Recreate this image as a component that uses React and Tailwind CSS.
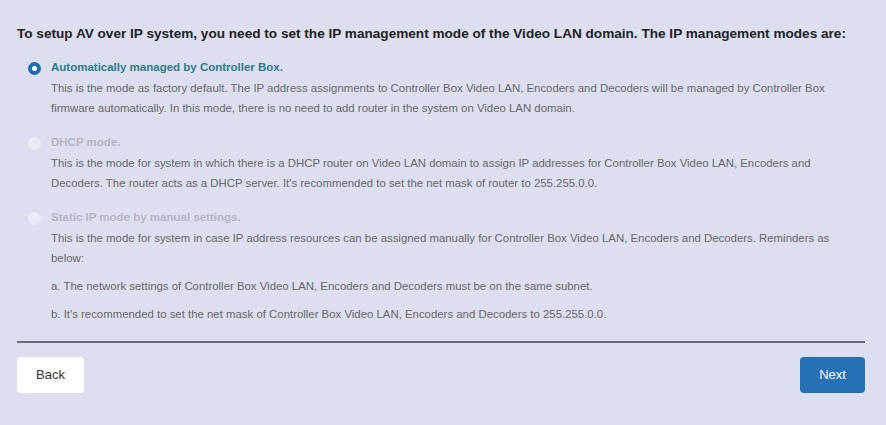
import { useState } from "react";

const modes = [
  {
    id: "auto",
    title: "Automatically managed by Controller Box.",
    body: [
      "This is the mode as factory default. The IP address assignments to Controller Box Video LAN, Encoders and Decoders will be managed by Controller Box firmware automatically. In this mode, there is no need to add router in the system on Video LAN domain.",
    ],
  },
  {
    id: "dhcp",
    title: "DHCP mode.",
    body: [
      "This is the mode for system in which there is a DHCP router on Video LAN domain to assign IP addresses for Controller Box Video LAN, Encoders and Decoders. The router acts as a DHCP server. It's recommended to set the net mask of router to 255.255.0.0.",
    ],
  },
  {
    id: "static",
    title: "Static IP mode by manual settings.",
    body: [
      "This is the mode for system in case IP address resources can be assigned manually for Controller Box Video LAN, Encoders and Decoders. Reminders as below:",
      "a. The network settings of Controller Box Video LAN, Encoders and Decoders must be on the same subnet.",
      "b. It's recommended to set the net mask of Controller Box Video LAN, Encoders and Decoders to 255.255.0.0.",
    ],
  },
];

const Radio = ({ checked }) =>
  checked ? (
    <span className="w-[13px] h-[13px] rounded-full bg-[#1f6db4] flex items-center justify-center shrink-0">
      <span className="w-[5px] h-[5px] rounded-full bg-white" />
    </span>
  ) : (
    <span className="w-[13px] h-[13px] rounded-full bg-[#ebebf5] shrink-0" />
  );

const App = () => {
  const [mode] = useState("auto");

  return (
    <div
      className="w-[886px] h-[425px] bg-[#dddeef] pl-[17px] pr-[21px] pt-[24px] text-[#686868]"
      style={{ fontFamily: '"Liberation Sans", Arial, sans-serif' }}
    >
      <h1 className="text-[13.6px] leading-[20px] font-bold text-[#222] whitespace-nowrap">
        To setup AV over IP system, you need to set the IP management mode of the Video LAN domain. The IP management modes are:
      </h1>

      <div className="mt-[14px] flex flex-col gap-[15px] pr-[19px]">
        {modes.map((m) => {
          const active = m.id === mode;
          return (
            <div key={m.id}>
              <div className="flex items-center gap-[10px] pl-[11px] h-[20px]">
                <Radio checked={active} />
                <span
                  className={
                    "text-[11.5px] font-bold " +
                    (active ? "text-[#2b7d8a]" : "text-[#b6b6c6]")
                  }
                >
                  {m.title}
                </span>
              </div>
              <div className="pl-[34px] flex flex-col gap-[8px]">
                {m.body.map((p, i) => (
                  <p key={i} className="text-[11.4px] leading-[20px]">
                    {p}
                  </p>
                ))}
              </div>
            </div>
          );
        })}
      </div>

      <div className="mt-[17px] h-[2px] bg-[#6c6c78]" />

      <div className="mt-[14px] flex justify-between">
        <button className="w-[67px] h-[36px] rounded bg-white text-[13px] text-[#333]">
          Back
        </button>
        <button className="w-[65px] h-[36px] rounded bg-[#2670b6] text-[13px] text-white">
          Next
        </button>
      </div>
    </div>
  );
};

export default App;
